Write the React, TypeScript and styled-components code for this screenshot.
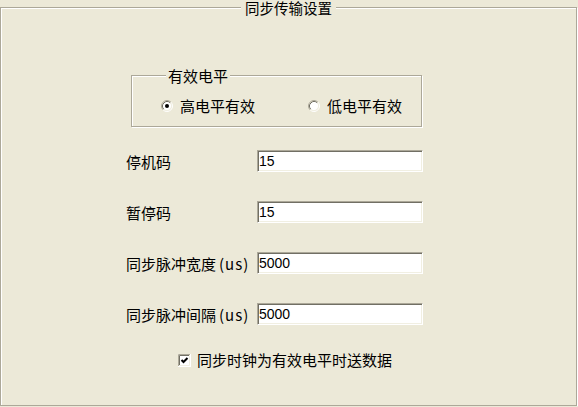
import { Fragment } from 'react';
import styled, { createGlobalStyle } from 'styled-components';

const face = '#ECE9D8';
const shadow = '#ACA899';
const darkShadow = '#716F64';
const light = '#F1EFE2';

const GlobalStyle = createGlobalStyle`
  html, body {
    margin: 0;
    padding: 0;
    background: ${face};
  }
  body {
    font-family: "Noto Sans CJK SC", "Noto Sans", sans-serif;
    font-size: 15px;
    color: #000;
  }
`;

// etched frame: gray line with a white line one pixel below/right of it
const Panel = styled.fieldset`
  box-sizing: border-box;
  width: 577px;
  height: 406px;
  margin: 0;
  padding: 53px 0 0 0;
  border: 1px solid ${shadow};
  box-shadow: 1px 1px 0 #fff, inset 1px 1px 0 #fff;
  min-width: 0;
`;

const Title = styled.legend`
  margin: 0 auto;
  padding: 0 4px;
  font-size: 14.5px;
  line-height: 15px;
  background: ${face};
`;

const Body = styled.div`
  display: flex;
  flex-direction: column;
  align-items: flex-start;
  padding-left: 125px;
`;

const GroupBox = styled.fieldset`
  box-sizing: border-box;
  width: 291px;
  margin: 0 0 0 5px;
  padding: 15px 0 12px 29px;
  border: 1px solid ${shadow};
  box-shadow: 1px 1px 0 #fff, inset 1px 1px 0 #fff;
  min-width: 0;
`;

const GroupTitle = styled.legend`
  margin-left: 5px;
  padding: 0 2px;
  line-height: 15px;
  background: ${face};
`;

const RadioRow = styled.div`
  display: grid;
  grid-template-columns: 147px auto;
  height: 16px;
`;

const Choice = styled.label`
  display: flex;
  align-items: center;
  gap: 7px;
  line-height: 16px;
  white-space: nowrap;
`;

const Fields = styled.div`
  display: grid;
  grid-template-columns: 131px 166px;
  row-gap: 29px;
  margin-top: 23px;
`;

const FieldLabel = styled.span`
  display: flex;
  align-items: center;
  height: 22px;
  white-space: nowrap;
`;

const Unit = styled.span`
  margin-left: 3px;
  letter-spacing: 1px;
`;

const TextBox = styled.input`
  box-sizing: border-box;
  width: 166px;
  height: 22px;
  margin: 0;
  padding: 0 1px 0 1px;
  border: 1px solid;
  border-color: ${shadow} #fff #fff ${shadow};
  box-shadow: inset 1px 1px 0 ${darkShadow}, inset -1px -1px 0 ${light};
  background: #fff;
  font-family: "Liberation Sans", Arial, sans-serif;
  font-size: 14px;
  color: #000;
  outline: none;
`;

const CheckRow = styled.label`
  display: flex;
  align-items: center;
  gap: 6px;
  margin: 27px 0 0 52px;
  line-height: 16px;
  white-space: nowrap;
`;

function Radio({ checked }: { checked?: boolean }) {
  return (
    <svg width="12" height="12" viewBox="0 0 12 12">
      <circle cx="6" cy="6" r="4.5" fill="#fff" />
      <path d="M2.11 9.89A5.5 5.5 0 0 1 9.89 2.11" fill="none" stroke={shadow} />
      <path d="M9.89 2.11A5.5 5.5 0 0 1 2.11 9.89" fill="none" stroke="#fff" />
      <path d="M2.82 9.18A4.5 4.5 0 0 1 9.18 2.82" fill="none" stroke={darkShadow} />
      <path d="M9.18 2.82A4.5 4.5 0 0 1 2.82 9.18" fill="none" stroke={light} />
      {checked && <circle cx="6" cy="6" r="2" fill="#000" />}
    </svg>
  );
}

function CheckBox({ checked }: { checked?: boolean }) {
  return (
    <svg width="13" height="13" viewBox="0 0 13 13">
      <rect x="0" y="0" width="13" height="13" fill="#fff" />
      <path d="M0.5 12V0.5H12" fill="none" stroke={shadow} />
      <path d="M1.5 11V1.5H11" fill="none" stroke={darkShadow} />
      <path d="M1 11.5H11.5V1" fill="none" stroke={light} />
      <path d="M0 12.5H12.5V0" fill="none" stroke="#fff" />
      {checked && (
        <polyline points="3.5,6 5.5,8 9.5,4" fill="none" stroke="#000" strokeWidth="2" />
      )}
    </svg>
  );
}

const fields = [
  { label: '停机码', value: '15' },
  { label: '暂停码', value: '15' },
  { label: '同步脉冲宽度', unit: '(us)', value: '5000' },
  { label: '同步脉冲间隔', unit: '(us)', value: '5000' },
];

export default function App() {
  return (
    <>
      <GlobalStyle />
      <Panel>
        <Title>同步传输设置</Title>
        <Body>
          <GroupBox>
            <GroupTitle>有效电平</GroupTitle>
            <RadioRow>
              <Choice>
                <Radio checked />
                高电平有效
              </Choice>
              <Choice>
                <Radio />
                低电平有效
              </Choice>
            </RadioRow>
          </GroupBox>
          <Fields>
            {fields.map((f) => (
              <Fragment key={f.label}>
                <FieldLabel>
                  {f.label}
                  {f.unit && <Unit>{f.unit}</Unit>}
                </FieldLabel>
                <TextBox defaultValue={f.value} />
              </Fragment>
            ))}
          </Fields>
          <CheckRow>
            <CheckBox checked />
            同步时钟为有效电平时送数据
          </CheckRow>
        </Body>
      </Panel>
    </>
  );
}
